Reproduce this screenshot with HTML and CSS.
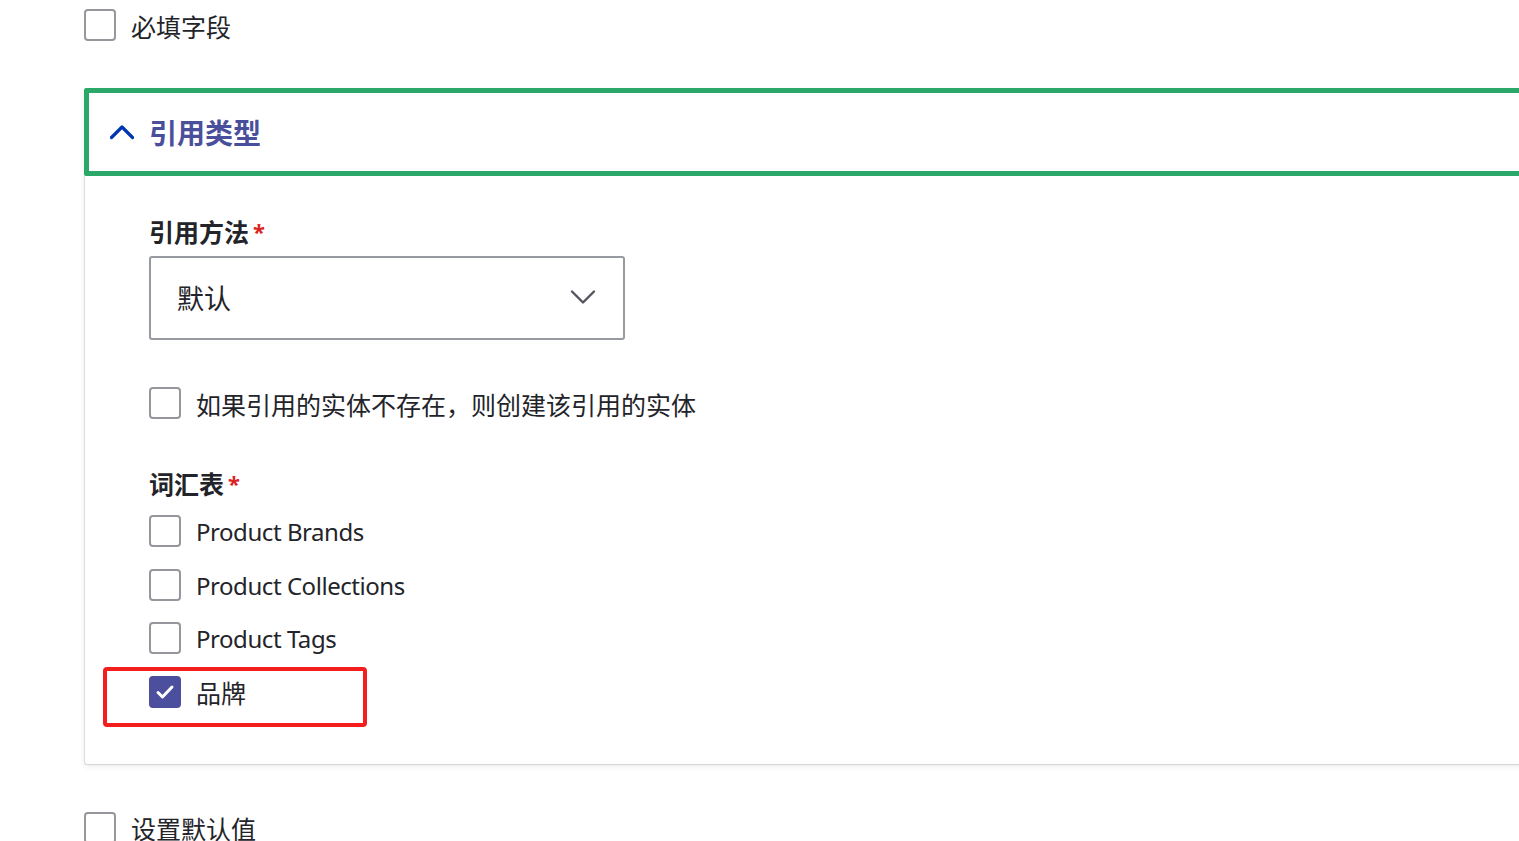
FILE: index.html
```html
<!DOCTYPE html>
<html lang="zh-CN">
<head>
<meta charset="utf-8">
<title>字段设置</title>
<link rel="stylesheet" href="styles.css">
</head>
<body>
<div class="page">
  <label class="check-row top-row">
    <span class="box"></span>
    <span class="check-text">必填字段</span>
  </label>

  <section class="details">
    <div class="summary">
      <svg class="summary-chevron" width="24" height="16" viewBox="0 0 24 16"><polyline points="1.5,13.5 12,3 22.5,13.5" fill="none" stroke="#0036b1" stroke-width="3.2" stroke-linecap="round" stroke-linejoin="round"/></svg>
      <span class="summary-title">引用类型</span>
    </div>
    <div class="details-body">
      <div class="form-label">引用方法<span class="req">*</span></div>
      <div class="select">
        <span class="select-value">默认</span>
        <svg class="select-chevron" width="26" height="16" viewBox="0 0 26 16"><polyline points="2,2.5 13,13.5 24,2.5" fill="none" stroke="#545560" stroke-width="2.4" stroke-linecap="round" stroke-linejoin="round"/></svg>
      </div>

      <label class="check-row create-row">
        <span class="box"></span>
        <span class="check-text">如果引用的实体不存在，则创建该引用的实体</span>
      </label>

      <div class="form-label vocab-label">词汇表<span class="req">*</span></div>
      <div class="options">
        <label class="check-row option"><span class="box"></span><span class="check-text latin">Product Brands</span></label>
        <label class="check-row option"><span class="box"></span><span class="check-text latin">Product Collections</span></label>
        <label class="check-row option"><span class="box"></span><span class="check-text latin">Product Tags</span></label>
        <label class="check-row option highlighted">
          <span class="box checked"><svg width="20" height="16" viewBox="0 0 20 16"><polyline points="3,8.5 7.5,13 17,3" fill="none" stroke="#ffffff" stroke-width="3" stroke-linecap="round" stroke-linejoin="round"/></svg></span>
          <span class="check-text">品牌</span>
          <span class="annot"></span>
        </label>
      </div>
    </div>
  </section>

  <label class="check-row bottom-row">
    <span class="box"></span>
    <span class="check-text">设置默认值</span>
  </label>
</div>
</body>
</html>
```

FILE: styles.css
```css
html, body {
  margin: 0;
  padding: 0;
  background: #ffffff;
  overflow: hidden;
}
body {
  font-family: "Noto Sans", "Noto Sans CJK SC", sans-serif;
  color: #232429;
  font-size: 25px;
}
.page {
  padding-left: 84px;
  width: 1600px;
}
.check-row {
  display: flex;
  align-items: center;
  gap: 15px;
  height: 32px;
  line-height: 32px;
  position: relative;
}
.box {
  box-sizing: border-box;
  width: 32px;
  height: 32px;
  border: 2px solid #95979c;
  border-radius: 4px;
  background: #ffffff;
  flex: none;
  display: flex;
  align-items: center;
  justify-content: center;
}
.box.checked {
  background: #4b4f9e;
  border-color: #4b4f9e;
}
.check-text {
  white-space: nowrap;
  padding-top: 3px;
}
.check-text.latin {
  font-size: 24px;
  letter-spacing: -0.45px;
  padding-top: 2px;
}
.top-row {
  margin-top: 9px;
}
.details {
  margin-top: 47px;
  width: 1500px;
  border-left: 1px solid #dcdce2;
  box-shadow: 0 1px 1px rgba(0, 0, 0, 0.14), 0 3px 6px rgba(0, 0, 0, 0.06);
  border-radius: 3px 0 0 3px;
  background: #fff;
}
.summary {
  box-sizing: border-box;
  height: 88px;
  margin-left: -1px;
  border: 5px solid #2aa86a;
  border-right: none;
  border-radius: 3px 0 0 3px;
  display: flex;
  align-items: center;
  padding-left: 21px;
  gap: 15px;
}
.summary-chevron {
  display: block;
  margin-top: -1px;
}
.summary-title {
  font-size: 28px;
  font-weight: 700;
  color: #4a4f9c;
  line-height: 40px;
  padding-top: 2px;
}
.details-body {
  padding: 37px 0 56px 64px;
}
.form-label {
  font-weight: 700;
  line-height: 36px;
  height: 36px;
}
.req {
  color: #dc2323;
  font-size: 22px;
  margin-left: 4px;
  vertical-align: 2px;
}
.select {
  box-sizing: border-box;
  margin-top: 7px;
  width: 476px;
  height: 84px;
  border: 2px solid #989aa2;
  border-radius: 3px;
  display: flex;
  align-items: center;
  justify-content: space-between;
  padding: 0 27px 0 26px;
}
.select-value {
  font-size: 27px;
  line-height: 32px;
  padding-top: 2px;
}
.select-chevron {
  display: block;
  margin-top: -2px;
}
.create-row {
  margin-top: 47px;
}
.vocab-label {
  margin-top: 46px;
}
.options {
  display: flex;
  flex-direction: column;
  gap: 21.5px;
  margin-top: 14px;
}
.annot {
  position: absolute;
  left: -46px;
  top: -9px;
  width: 264px;
  height: 60px;
  box-sizing: border-box;
  border: 4px solid #f41e1e;
  border-radius: 4px;
}
.bottom-row {
  margin-top: 48px;
}
```
